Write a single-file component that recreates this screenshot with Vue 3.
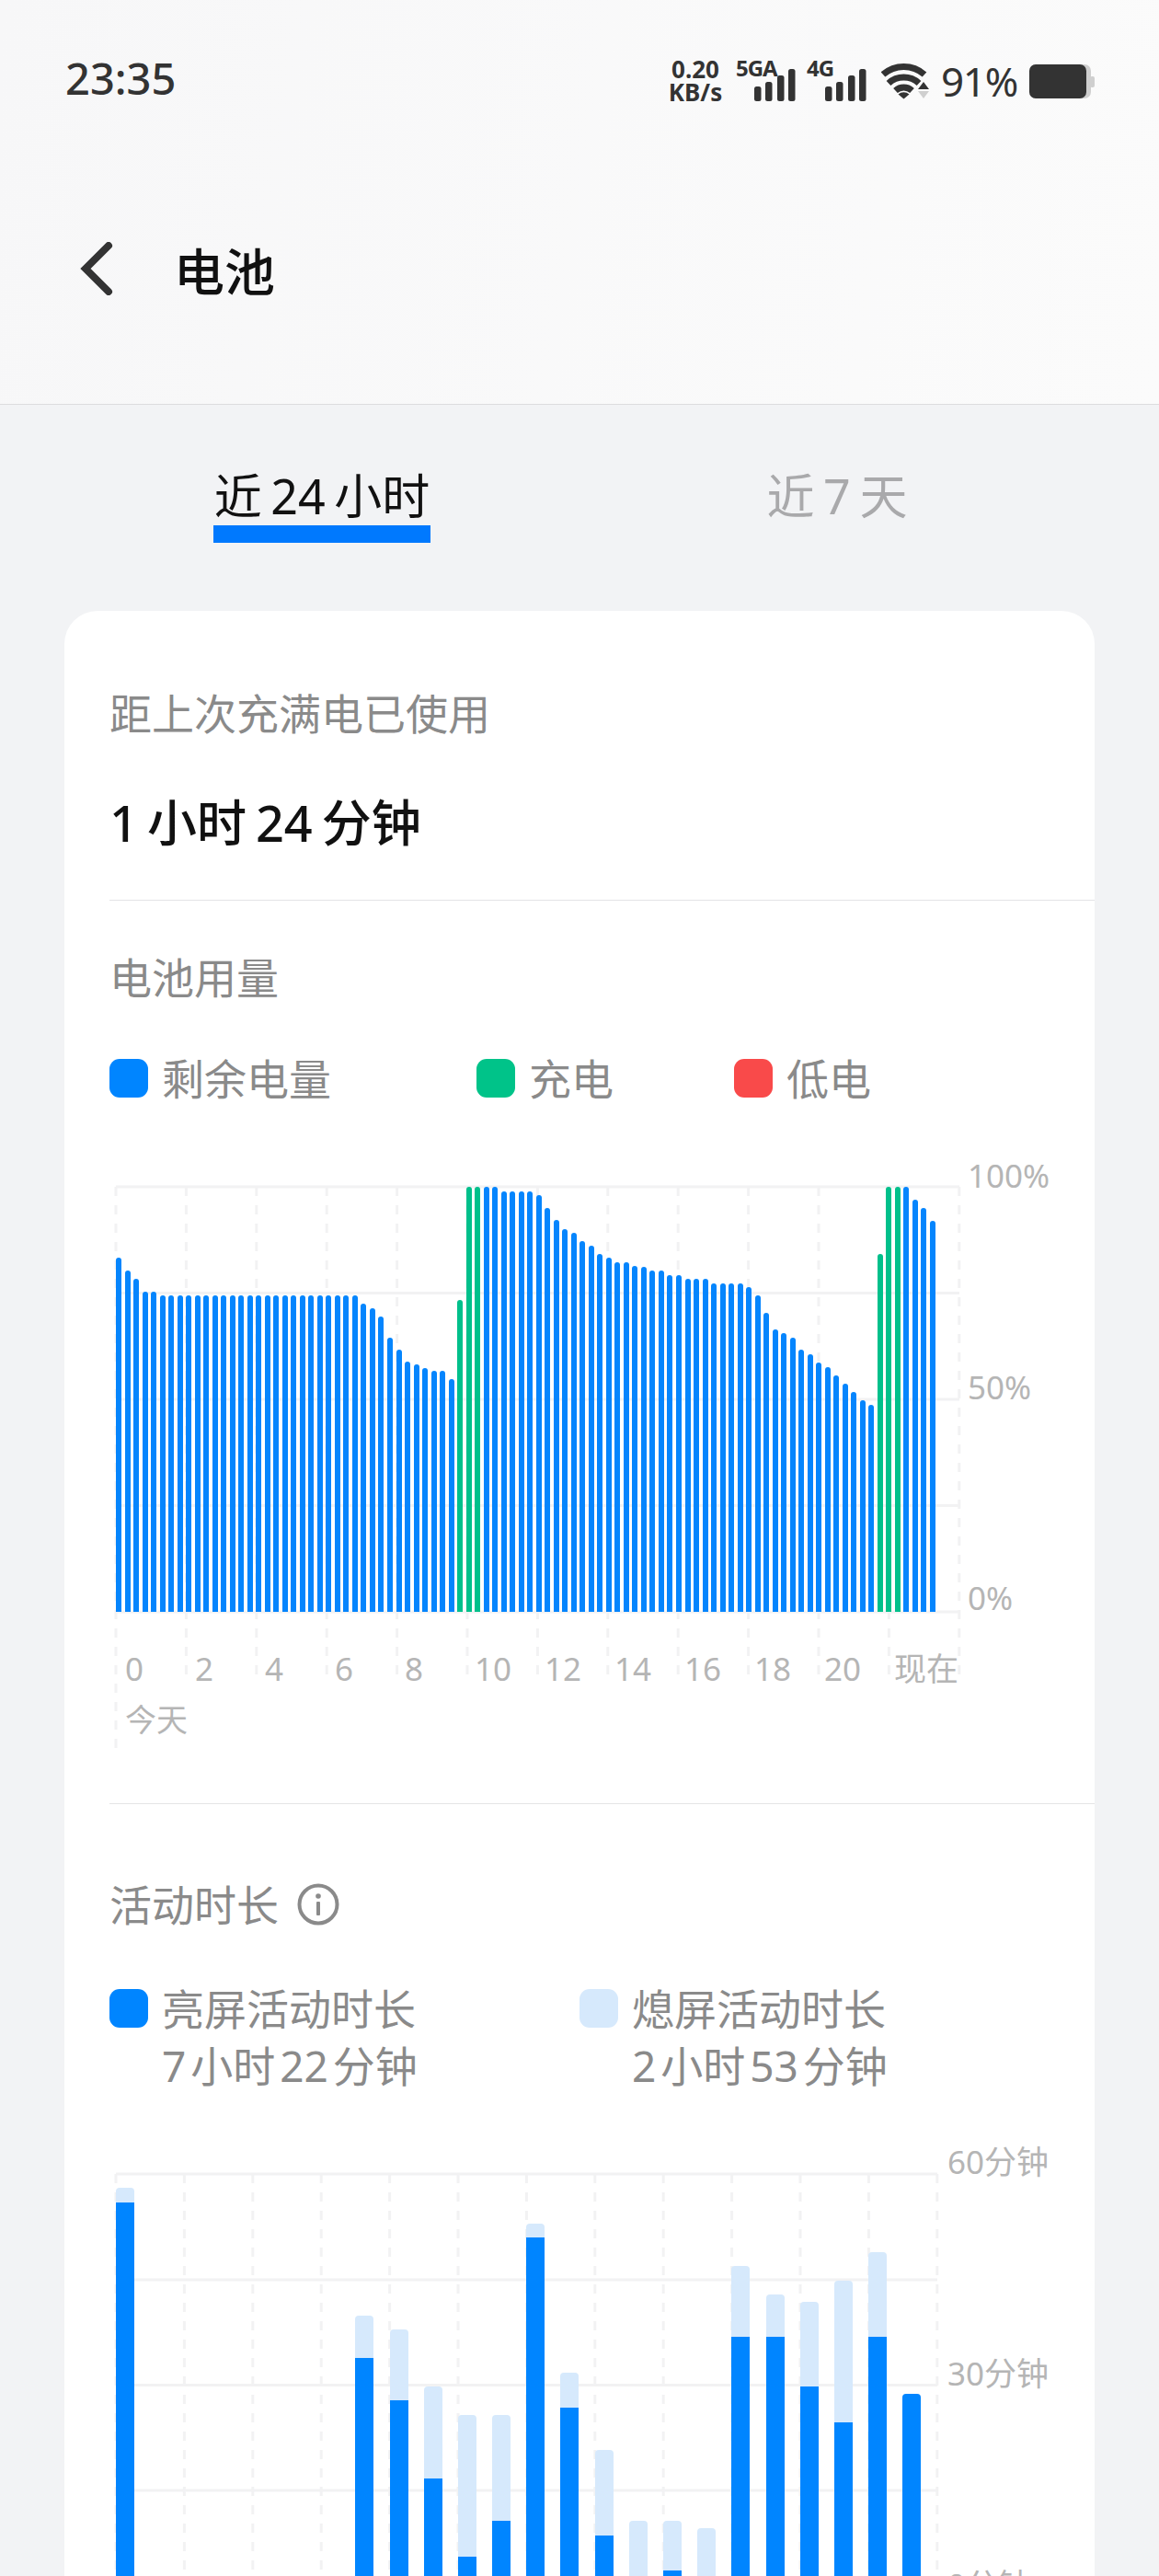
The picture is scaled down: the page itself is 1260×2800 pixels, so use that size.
<template>
  <div class="page">
    <header class="head">
      <div class="status">
        <span class="time">23:35</span>
        <div class="status-right">
          <div class="speed"><span>0.20</span><span>KB/s</span></div>
          <svg class="signal" width="65" height="52" viewBox="0 -6 65 52">
            <text x="0" y="18" class="net">5GA</text>
            <rect v-for="b in signalBars" :key="b.x" :x="b.x" :y="b.y" width="7.5" :height="45 - b.y" rx="2.5" fill="#333" />
          </svg>
          <svg class="signal second" width="65" height="52" viewBox="0 -6 65 52">
            <text x="0" y="18" class="net">4G</text>
            <rect v-for="b in signalBars" :key="b.x" :x="b.x" :y="b.y" width="7.5" :height="45 - b.y" rx="2.5" fill="#333" />
          </svg>
          <svg class="wifi" width="52" height="46" viewBox="0 0 52 46">
            <g fill="none" stroke="#333" stroke-width="7">
              <path d="M2 16 A34 34 0 0 1 47 16" />
              <path d="M8 25.5 A24.5 24.5 0 0 1 41 25.5" />
              <path d="M15.5 33.5 A13.5 13.5 0 0 1 33.5 33.5" />
            </g>
            <path d="M24.5 42.5 L18.5 37.5 A9 9 0 0 1 30.5 37.5 Z" fill="#333" />
            <path d="M46 24 L52 32 H40 Z" fill="#333" />
            <path d="M40 34 H52 L46 42 Z" fill="#cfcfcf" />
          </svg>
          <span class="level">91%</span>
          <svg class="battery" width="71" height="37" viewBox="0 0 71 37">
            <rect x="0" y="0" width="67" height="37" rx="7" fill="#cfcfcf" />
            <rect x="0" y="0" width="62" height="37" rx="7" fill="#333" />
            <rect x="66" y="13" width="5" height="12" rx="2" fill="#cfcfcf" />
          </svg>
        </div>
      </div>
      <div class="nav">
        <svg class="back" width="36" height="58" viewBox="0 0 36 58">
          <path d="M31 4 L6 29 L31 54" fill="none" stroke="#333" stroke-width="8" stroke-linecap="round" />
        </svg>
        <span class="title">电池</span>
      </div>
    </header>

    <div class="tabs">
      <div class="tab"><span class="tab-label active">近 24 小时</span></div>
      <div class="tab"><span class="tab-label">近 7 天</span></div>
    </div>

    <main class="card">
      <div class="muted first-line">距上次充满电已使用</div>
      <div class="used">1 小时 24 分钟</div>
      <div class="divider used-divider"></div>

      <div class="muted usage-title">电池用量</div>
      <div class="legend">
        <div v-for="l in batteryLegend" :key="l.label" class="legend-item" :style="{ width: l.width + 'px' }">
          <i class="swatch" :style="{ background: l.color }"></i>
          <span class="muted">{{ l.label }}</span>
        </div>
      </div>

      <div class="chart battery-chart">
        <div class="plot battery-plot">
          <svg class="grid" width="917" height="610">
            <line v-for="y in [0, 115.5, 231, 346.5, 462]" :key="y" x1="0" x2="917" :y1="y" :y2="y" class="h-line" />
            <line v-for="n in 13" :key="n" :x1="(n - 1) * 76.4" :x2="(n - 1) * 76.4" y1="0" :y2="n === 1 ? 610 : 530" class="v-line" />
          </svg>
          <div class="bars thin">
            <i
              v-for="(b, i) in batteryBars"
              :key="i"
              class="thin-bar"
              :class="{ charging: b.charging }"
              :style="{ height: b.height + 'px' }"
            ></i>
          </div>
          <span class="y-label" style="top: -37px; left: 926px">100%</span>
          <span class="y-label" style="top: 193px; left: 926px">50%</span>
          <span class="y-label" style="top: 422px; left: 926px">0%</span>
        </div>
        <div class="x-axis">
          <span v-for="t in hours" :key="t">{{ t }}</span>
        </div>
        <div class="today">今天</div>
      </div>
      <div class="divider"></div>

      <div class="muted active-title">
        活动时长
        <svg class="info" width="46" height="46" viewBox="0 0 46 46">
          <circle cx="23" cy="23" r="20.5" fill="none" stroke="#8a8a8a" stroke-width="4" />
          <circle cx="23" cy="14" r="2.8" fill="#8a8a8a" />
          <rect x="21" y="20" width="4" height="15" rx="1" fill="#8a8a8a" />
        </svg>
      </div>
      <div class="legend active-legend">
        <div class="legend-item top" style="width: 511px">
          <i class="swatch" style="background: #0085ff"></i>
          <div class="muted">亮屏活动时长<br />7 小时 22 分钟</div>
        </div>
        <div class="legend-item top">
          <i class="swatch" style="background: #d6e9fc"></i>
          <div class="muted">熄屏活动时长<br />2 小时 53 分钟</div>
        </div>
      </div>

      <div class="chart active-chart">
        <div class="plot active-plot">
          <svg class="grid" width="893" height="459">
            <line v-for="y in [0, 115, 229.5, 344, 459]" :key="y" x1="0" x2="893" :y1="y" :y2="y" class="h-line" />
            <line v-for="n in 13" :key="n" :x1="(n - 1) * 74.4" :x2="(n - 1) * 74.4" y1="0" y2="459" class="v-line" />
          </svg>
          <div class="bars wide">
            <div
              v-for="(b, i) in activeBars"
              :key="i"
              class="wide-bar"
              :style="{ height: b.total + 'px' }"
            >
              <i class="wide-fill" :style="{ height: b.on + 'px' }"></i>
            </div>
          </div>
          <span class="y-label" style="top: -38px; left: 904px">60分钟</span>
          <span class="y-label" style="top: 192px; left: 904px">30分钟</span>
          <span class="y-label" style="top: 422px; left: 904px">0分钟</span>
        </div>
      </div>
    </main>
  </div>
</template>

<script setup>
const signalBars = [
  { x: 20, y: 29 },
  { x: 32, y: 24 },
  { x: 45, y: 17 },
  { x: 57, y: 10 },
]

const batteryLegend = [
  { label: '剩余电量', color: '#0085ff', width: 399 },
  { label: '充电', color: '#00c389', width: 280 },
  { label: '低电', color: '#f94a4a', width: 200 },
]

const hours = ['0', '2', '4', '6', '8', '10', '12', '14', '16', '18', '20', '现在']

// y of each bar's top in the screenshot, bottom of the plot is 1752
const batteryTops = [
  1367, 1381, 1390, 1404, 1404,
  ...Array(23).fill(1408),
  1417, 1422, 1431, 1454, 1467, 1480, 1483, 1487, 1490, 1490, 1499,
  1413, 1290, 1290, 1290, 1290,
  1295, 1295, 1295, 1295, 1299, 1313, 1326, 1336, 1340, 1349, 1354, 1363, 1367, 1372, 1372, 1376, 1377,
  1381, 1381, 1386, 1386, 1390, 1390, 1390, 1395, 1395, 1395, 1395, 1399, 1408, 1427,
  1445, 1449, 1454, 1467, 1472, 1481, 1486, 1495, 1504, 1513, 1522, 1527,
  1363, 1290, 1290, 1290, 1304, 1313, 1327,
]
const chargingBars = [39, 40, 41, 87, 88, 89]
const batteryBars = batteryTops.map((top, i) => ({
  height: 1752 - top,
  charging: chargingBars.includes(i),
}))

// [top of light part, top of dark part], bottom of the plot is 2822
const activeTops = [
  [2378, 2394], null, null, null, null, null, null,
  [2517, 2563], [2532, 2609], [2594, 2694], [2625, 2779], [2625, 2740],
  [2417, 2432], [2579, 2617], [2663, 2756], [2740, 2806], [2740, 2794],
  [2748, 2810], [2463, 2540], [2494, 2540], [2502, 2594], [2479, 2633],
  [2448, 2540], [2602, 2602],
]
const activeBars = activeTops.map((t) =>
  t ? { total: 2822 - t[0], on: 2822 - t[1] } : { total: 0, on: 0 },
)
</script>

<style>
html,
body {
  margin: 0;
  background: #f2f3f5;
}
</style>

<style scoped>
.page {
  width: 1260px;
  height: 2800px;
  overflow: hidden;
  background: #f2f3f5;
  font-family: "Noto Sans", "Noto Sans CJK SC", sans-serif;
}

.head {
  height: 440px;
  box-sizing: border-box;
  border-bottom: 1px solid #dcdcde;
  background: linear-gradient(100deg, #f7f7f8, #fbfbfb);
}

.status {
  height: 170px;
  display: flex;
  align-items: center;
  justify-content: space-between;
  padding: 0 70px 0 71px;
  box-sizing: border-box;
  color: #333;
}

.time {
  font-size: 47px;
  font-weight: 500;
}

.status-right {
  display: flex;
  align-items: center;
  padding-top: 6px;
}

.speed {
  display: flex;
  flex-direction: column;
  align-items: center;
  width: 54px;
  font-size: 26px;
  font-weight: 700;
  line-height: 25px;
  margin-right: 17px;
}

.net {
  font-family: "Noto Sans", sans-serif;
  font-size: 24px;
  font-weight: 700;
  fill: #333;
  letter-spacing: -1px;
}

.signal {
  margin-top: -6px;
  margin-right: 12px;
}

.signal.second {
  margin-right: 16px;
}

.wifi {
  margin-right: 13px;
}

.level {
  font-size: 44px;
  line-height: 46px;
  letter-spacing: -1.3px;
  margin-right: 13px;
}

.nav {
  height: 244px;
  display: flex;
  align-items: center;
  padding-left: 87px;
}

.back {
  margin-right: 66px;
}

.title {
  font-size: 55px;
  font-weight: 500;
  color: #111;
}

.tabs {
  display: grid;
  grid-template-columns: 560px 560px;
  padding: 67px 70px 74px;
}

.tab {
  display: flex;
  justify-content: center;
}

.tab-label {
  padding: 0 3px;
  font-size: 52px;
  line-height: 64px;
  word-spacing: -4px;
  color: #a9a9ab;
  border-bottom: 19px solid transparent;
}

.tab-label.active {
  padding: 0 1px;
  color: #111;
  border-bottom-color: #0079fe;
}

.card {
  width: 1120px;
  margin-left: 70px;
  box-sizing: border-box;
  min-height: 2400px;
  padding: 81px 0 0 49px;
  background: #fff;
  border-radius: 36px 36px 0 0;
}

.muted {
  font-size: 46px;
  line-height: 60px;
  color: #8a8a8a;
}

.used {
  margin-top: 54px;
  font-size: 54px;
  font-weight: 500;
  line-height: 70px;
  word-spacing: -4px;
  color: #111;
}

.divider {
  height: 1px;
  background: #e4e4e6;
}

.used-divider {
  margin-top: 49px;
}

.usage-title {
  margin-top: 53px;
}

.legend {
  display: flex;
  margin-top: 50px;
}

.legend-item {
  display: flex;
  align-items: center;
  gap: 15px;
}

.legend-item.top {
  align-items: flex-start;
}

.legend-item.top .muted {
  line-height: 62px;
  word-spacing: -7px;
}

.legend-item.top .swatch {
  margin-top: 10px;
}

.swatch {
  width: 42px;
  height: 42px;
  flex: none;
  border-radius: 11px;
}

.chart {
  padding-left: 7px;
  margin-top: 88px;
}

.battery-chart {
  height: 670px;
  box-sizing: border-box;
}

.active-chart {
  margin-top: 87px;
}

.plot {
  position: relative;
}

.battery-plot {
  width: 917px;
  height: 462px;
}

.active-plot {
  width: 893px;
  height: 459px;
}

.grid {
  position: absolute;
  left: 0;
  top: 0;
  overflow: visible;
}

.h-line {
  stroke: #f2f2f3;
  stroke-width: 3;
}

.v-line {
  stroke: #f2f2f3;
  stroke-width: 3;
  stroke-dasharray: 10 10;
}

.bars {
  position: absolute;
  left: 0;
  right: 0;
  bottom: 0;
  display: flex;
  align-items: flex-end;
}

.bars.thin {
  gap: 3.53px;
}

.bars.wide {
  gap: 17.2px;
}

.thin-bar {
  flex: none;
  width: 6px;
  border-radius: 3px 3px 0 0;
  background: #0585fd;
}

.thin-bar.charging {
  background: #00c08b;
}

.wide-bar {
  flex: none;
  width: 20px;
  display: flex;
  align-items: flex-end;
  overflow: hidden;
  border-radius: 4px 4px 0 0;
  background: #d6e9fc;
}

.wide-fill {
  display: block;
  width: 100%;
  background: #0085ff;
}

.y-label {
  position: absolute;
  font-size: 35px;
  line-height: 50px;
  white-space: nowrap;
  color: #b5b5b5;
}

.x-axis {
  position: relative;
  display: grid;
  grid-template-columns: repeat(12, 76px);
  margin-top: 37px;
  padding-left: 10px;
  font-size: 35px;
  line-height: 50px;
  color: #b5b5b5;
}

.today {
  position: relative;
  padding-left: 10px;
  margin-top: 5px;
  font-size: 34px;
  line-height: 50px;
  color: #b5b5b5;
}

.active-title {
  display: flex;
  align-items: center;
  gap: 20px;
  margin-top: 79px;
}

.active-legend {
  margin-top: 52px;
}
</style>
